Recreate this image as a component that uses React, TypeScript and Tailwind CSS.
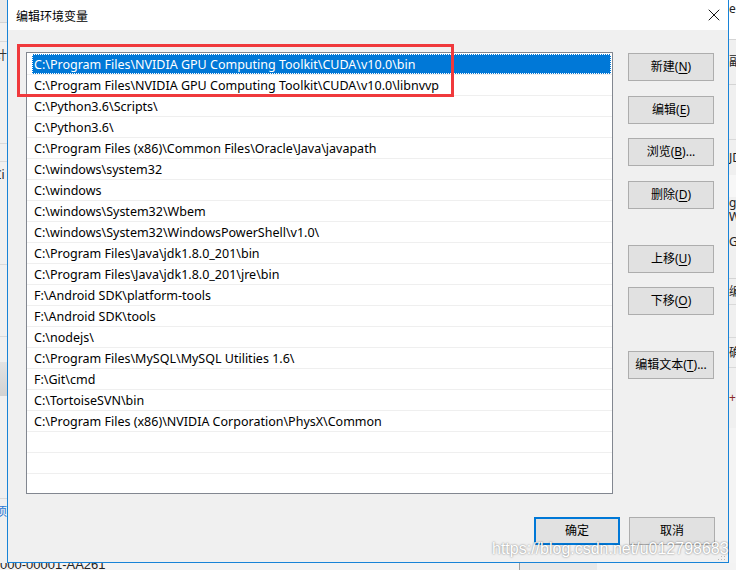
import { X } from 'lucide-react';

const PATHS = [
  'C:\\Program Files\\NVIDIA GPU Computing Toolkit\\CUDA\\v10.0\\bin',
  'C:\\Program Files\\NVIDIA GPU Computing Toolkit\\CUDA\\v10.0\\libnvvp',
  'C:\\Python3.6\\Scripts\\',
  'C:\\Python3.6\\',
  'C:\\Program Files (x86)\\Common Files\\Oracle\\Java\\javapath',
  'C:\\windows\\system32',
  'C:\\windows',
  'C:\\windows\\System32\\Wbem',
  'C:\\windows\\System32\\WindowsPowerShell\\v1.0\\',
  'C:\\Program Files\\Java\\jdk1.8.0_201\\bin',
  'C:\\Program Files\\Java\\jdk1.8.0_201\\jre\\bin',
  'F:\\Android SDK\\platform-tools',
  'F:\\Android SDK\\tools',
  'C:\\nodejs\\',
  'C:\\Program Files\\MySQL\\MySQL Utilities 1.6\\',
  'F:\\Git\\cmd',
  'C:\\TortoiseSVN\\bin',
  'C:\\Program Files (x86)\\NVIDIA Corporation\\PhysX\\Common',
];

function WinButton({ label, hotkey, suffix = '', className = '', primary = false }: { label: string; hotkey?: string; suffix?: string; className?: string; primary?: boolean }) {
  return (
    <button
      className={`w-[86px] h-[28px] flex items-center justify-center bg-[#e1e1e1] text-[12px] text-black ${primary ? 'border-2 border-[#0078d7]' : 'border border-[#adadad]'} ${className}`}
    >
      {label}
      {hotkey && (
        <span>
          (<span className="underline underline-offset-2">{hotkey}</span>){suffix}
        </span>
      )}
    </button>
  );
}

function PathList() {
  const rows = [...PATHS, '', '', ''];
  return (
    <div className="w-[587px] h-[442px] border border-[#828790] bg-white overflow-hidden pt-px text-[12.5px]">
      {rows.map((p, i) => (
        <div key={i} className="h-[21px] border-b border-[#efefef] flex">
          {i === 0 ? (
            <div className="ml-[5px] mr-px flex-1 h-[20px] bg-[#0078d7] border border-dotted border-white flex items-center pl-px pt-[2px] text-white">
              {p}
            </div>
          ) : (
            <div className="pl-[7px] pt-[2px] flex items-center h-[20px]">{p}</div>
          )}
        </div>
      ))}
    </div>
  );
}

function LeftStrip() {
  return (
    <div className="w-[7px] h-full bg-[#f0f0f0] flex flex-col overflow-hidden text-[12px] leading-none">
      <div className="h-[23px] bg-[#e9e9e9] border-b border-[#d4d4d4]" />
      <div className="h-[19px] border-b border-[#d9d9d9]" />
      <div className="h-[20px] flex items-end justify-end text-[#333]">计</div>
      <div className="h-[82px] border-b border-[#dadada]" />
      <div className="h-[18px] border-b border-[#dadada]" />
      <div className="h-[26px] flex items-center -ml-[6px] text-[#222]">Ci</div>
      <div className="h-[77px] border-b border-[#dadada]" />
      <div className="h-[72px] border-b border-[#dadada]" />
      <div className="h-[25px]" />
      <div className="h-[34px] bg-gradient-to-b from-[#e3e3e3] to-[#d2d2d2]" />
      <div className="h-[103px] border-b border-[#dadada]" />
      <div className="h-[26px] flex items-center justify-end text-[#2a7ad6]">项</div>
    </div>
  );
}

function RightStrip() {
  return (
    <div className="w-[7px] h-full bg-[#f0f0f0] flex flex-col overflow-hidden text-[12px] leading-none text-[#222]">
      <div className="h-[40px] bg-white border-b border-[#d4d4d4] pt-[3px]">e</div>
      <div className="h-[45px] border-b border-[#d4d4d4] flex items-center">副</div>
      <div className="h-[55px] border-b border-[#d9d9d9]" />
      <div className="h-[35px] flex items-center">JD</div>
      <div className="h-[22px] bg-[#f7f7f7]" />
      <div className="h-[14px]">g</div>
      <div className="h-[16px]">W</div>
      <div className="h-[30px] flex items-center">Ge</div>
      <div className="h-[22px] border-b border-[#d4d4d4]" />
      <div className="h-[26px] flex items-center border-b border-[#d9d9d9]">编</div>
      <div className="h-[33px] border-b border-[#d9d9d9]" />
      <div className="h-[30px] flex items-center border-b border-[#d9d9d9]">确</div>
      <div className="h-[60px] flex items-center text-[#8b2a2a]">+</div>
      <div className="flex-1 bg-[#f4f4f4]" />
    </div>
  );
}

export default function App() {
  return (
    <div className="w-[736px] h-[570px] relative overflow-hidden bg-[#f0f0f0] font-['Noto_Sans','Noto_Sans_CJK_SC',sans-serif] text-[12px] text-black">
      <div className="flex h-[563px]">
        <LeftStrip />
        <div className="w-[722px] h-full border-x border-b border-[#1883d7] flex flex-col">
          {/* title bar */}
          <div className="h-[30px] bg-white flex items-center justify-between pl-[8px] pr-[4px] pt-[4px]">
            <span className="text-[12px]">编辑环境变量</span>
            <X className="w-[20px] h-[20px] -mt-[4px]" strokeWidth={1.1} />
          </div>

          <div className="flex-1 bg-[#f0f0f0] flex flex-col pl-[18px] pr-[13px] pt-[22px]">
            <div className="flex">
              <PathList />
              <div className="ml-[15px] pt-px flex flex-col">
                <WinButton label="新建" hotkey="N" />
                <WinButton label="编辑" hotkey="E" className="mt-[15px]" />
                <WinButton label="浏览" hotkey="B" suffix="..." className="mt-[14px]" />
                <WinButton label="删除" hotkey="D" className="mt-[15px]" />
                <WinButton label="上移" hotkey="U" className="mt-[36px]" />
                <WinButton label="下移" hotkey="O" className="mt-[14px]" />
                <WinButton label="编辑文本" hotkey="T" suffix="..." className="mt-[36px]" />
              </div>
            </div>

            <div className="flex justify-end gap-[9px] mt-[23px]">
              <WinButton label="确定" primary />
              <WinButton label="取消" />
            </div>
          </div>
        </div>
        <RightStrip />
      </div>

      {/* whatever sits under the dialog */}
      <div className="h-[7px] overflow-hidden flex bg-[#f3f3f3]">
        <div className="w-[519px] leading-[12px] -mt-[4px] text-[13px] text-[#222] font-['Liberation_Sans',sans-serif]">000-00001-AA261</div>
        <div className="w-[78px] bg-[#e8e8e8] border-l border-[#a0a0a0]" />
      </div>

      {/* annotation */}
      <div className="absolute left-[17px] top-[44px] w-[437px] h-[53px] border-[3px] border-[#f0393c]" />

      {/* resize grip */}
      <svg className="absolute left-[717px] top-[552px]" width="9" height="9" viewBox="0 0 9 9">
        <g fill="#b8b8b8">
          <rect x="7" y="1" width="1" height="1" />
          <rect x="4" y="4" width="1" height="1" />
          <rect x="7" y="4" width="1" height="1" />
          <rect x="1" y="7" width="1" height="1" />
          <rect x="4" y="7" width="1" height="1" />
          <rect x="7" y="7" width="1" height="1" />
        </g>
      </svg>

      {/* watermark */}
      <div className="absolute left-[492px] top-[540px] text-[16px] leading-[18px] text-white font-['Liberation_Sans',sans-serif] [text-shadow:0_0_2px_rgba(0,0,0,0.55)]">
        https://blog.csdn.net/u012798683
      </div>
    </div>
  );
}
